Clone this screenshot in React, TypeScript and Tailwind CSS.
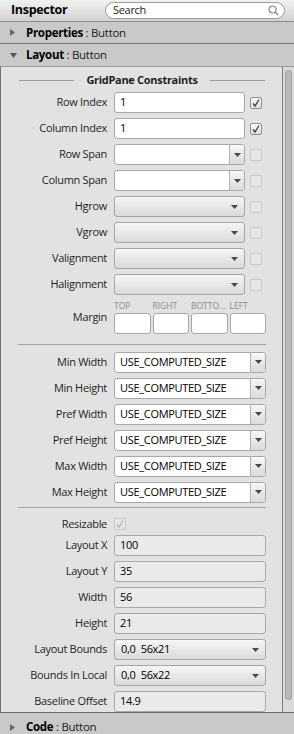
import React from 'react';

const Arrow: React.FC = () => (
  <svg width="7" height="4" viewBox="0 0 7 4">
    <path d="M0 0h7L3.5 4z" fill="#4a4a4a" />
  </svg>
);

const Check: React.FC<{ checked?: boolean; disabled?: boolean }> = ({ checked, disabled }) => (
  <div
    className={
      disabled
        ? 'w-[12px] h-[12px] rounded-[2px] border border-[#c9c9c9] bg-[#e6e6e6] flex items-center justify-center'
        : 'w-[12px] h-[12px] rounded-[2px] border border-[#8e8e8e] bg-linear-to-b from-[#fafafa] to-[#dedede] flex items-center justify-center'
    }
  >
    {checked && (
      <svg width="10" height="10" viewBox="0 0 10 10">
        <path d="M2 5.5 L4 8 L8 1.5" fill="none" stroke={disabled ? '#b4b4b4' : '#3d3d3d'} strokeWidth="1.3" />
      </svg>
    )}
  </div>
);

const TextField: React.FC<{ value?: string; w: string; readOnly?: boolean }> = ({ value, w, readOnly }) => (
  <div
    className={`${w} h-[21px] rounded-[3px] border border-[#a8a8a8] pl-[5px] flex items-center text-black ${
      readOnly ? 'bg-[#eaeaea]' : 'bg-white'
    }`}
  >
    {value}
  </div>
);

const Combo: React.FC<{ value?: string; w: string }> = ({ value, w }) => (
  <div
    className={`${w} h-[21px] rounded-[3px] border border-[#a6a6a6] bg-linear-to-b from-[#f6f6f6] to-[#dadada] pl-[6px] pr-[6px] flex items-center justify-between text-black whitespace-pre`}
  >
    <span>{value}</span>
    <Arrow />
  </div>
);

const EditCombo: React.FC<{ value?: string; w: string }> = ({ value, w }) => (
  <div className={`${w} h-[21px] rounded-[3px] border border-[#a8a8a8] bg-white flex overflow-hidden text-black`}>
    <div className="flex-1 pl-[5px] flex items-center">{value}</div>
    <div className="w-[15px] border-l border-[#b3b3b3] bg-linear-to-b from-[#f7f7f7] to-[#dadada] flex items-center justify-center">
      <Arrow />
    </div>
  </div>
);

const Row: React.FC<{ label: string; children: React.ReactNode; className?: string }> = ({ label, children, className }) => (
  <div className={`flex items-center h-[21px] ${className ?? ''}`}>
    <div className="w-[106px] text-right text-[#1f1f1f]">{label}</div>
    <div className="ml-[7px] flex items-center">{children}</div>
  </div>
);

const Section: React.FC<{ title: string; open?: boolean; className?: string }> = ({ title, open, className }) => (
  <div className={`flex items-center bg-[#c9c9c9] pl-[10px] text-[11.5px] ${className ?? ''}`}>
    <span className="w-[16px] flex items-center">
      {open ? (
        <svg width="7" height="5" viewBox="0 0 7 5">
          <path d="M0 0h7L3.5 5z" fill="#555" />
        </svg>
      ) : (
        <svg width="5" height="7" viewBox="0 0 5 7">
          <path d="M0 0v7L5 3.5z" fill="#666" />
        </svg>
      )}
    </span>
    <span className="font-bold text-black">{title}</span>
    <span className="text-[#222]">&nbsp;: Button</span>
  </div>
);

const constraintFields = [
  { label: 'Row Index', kind: 'text', value: '1', checked: true },
  { label: 'Column Index', kind: 'text', value: '1', checked: true },
  { label: 'Row Span', kind: 'edit' },
  { label: 'Column Span', kind: 'edit' },
  { label: 'Hgrow', kind: 'combo' },
  { label: 'Vgrow', kind: 'combo' },
  { label: 'Valignment', kind: 'combo' },
  { label: 'Halignment', kind: 'combo' },
];

const sizeFields = ['Min Width', 'Min Height', 'Pref Width', 'Pref Height', 'Max Width', 'Max Height'];

export default function App() {
  return (
    <div className="w-[294px] h-[734px] overflow-hidden flex flex-col bg-[#e2e2e2] font-['Open_Sans',sans-serif] text-[11px] tracking-[-0.3px]">
      <div className="h-[22px] shrink-0 flex items-center pl-[11px] pr-[9px] bg-linear-to-b from-[#f1f1f1] to-[#d2d2d2] border-b border-[#8d8d8d]">
        <span className="font-bold text-[12.5px] text-black">Inspector</span>
        <div className="ml-auto w-[180px] h-[17px] rounded-full border border-[#9c9c9c] bg-white flex items-center pl-[7px] pr-[5px] text-[#222]">
          <span>Search</span>
          <svg className="ml-auto" width="11" height="11" viewBox="0 0 11 11">
            <circle cx="4.5" cy="4.5" r="3.5" fill="none" stroke="#8a8a8a" strokeWidth="1.2" />
            <path d="M7 7 L10 10" stroke="#8a8a8a" strokeWidth="1.6" />
          </svg>
        </div>
      </div>

      <Section title="Properties" className="h-[22px] shrink-0 border-b border-[#727272]" />
      <Section title="Layout" open className="h-[23px] shrink-0 border-b border-[#9a9a9a]" />

      <div className="h-[645px] shrink-0 flex border-l border-[#707070] overflow-hidden">
        <div className="flex-1 flex flex-col pt-[5px]">
          <div className="h-[16px] flex items-center ml-[18px] w-[246px]">
            <div className="flex-1 h-px bg-[#9c9c9c]" />
            <span className="mx-[12px] font-bold text-[#1e1e1e]">GridPane Constraints</span>
            <div className="flex-1 h-px bg-[#9c9c9c]" />
          </div>

          <div className="mt-[4px] flex flex-col gap-[5px]">
            {constraintFields.map((f) => (
              <Row key={f.label} label={f.label}>
                {f.kind === 'text' && <TextField value={f.value} w="w-[131px]" />}
                {f.kind === 'edit' && <EditCombo w="w-[131px]" />}
                {f.kind === 'combo' && <Combo w="w-[131px]" />}
                <div className="ml-[5px]">
                  <Check checked={f.checked} disabled={!f.checked} />
                </div>
              </Row>
            ))}
          </div>

          <div className="mt-[5px] flex items-center">
            <div className="w-[106px] text-right text-[#1f1f1f]">Margin</div>
            <div className="ml-[7px] w-[152px]">
              <div className="grid grid-cols-4 gap-[2px] h-[12px] text-[8.5px] tracking-normal text-[#8c8c8c] leading-[12px]">
                <span>TOP</span>
                <span>RIGHT</span>
                <span>BOTTO...</span>
                <span>LEFT</span>
              </div>
              <div className="mt-[1px] grid grid-cols-4 gap-[2px]">
                <div className="h-[21px] rounded-[3px] border border-[#a8a8a8] bg-white" />
                <div className="h-[21px] rounded-[3px] border border-[#a8a8a8] bg-white" />
                <div className="h-[21px] rounded-[3px] border border-[#a8a8a8] bg-white" />
                <div className="h-[21px] rounded-[3px] border border-[#a8a8a8] bg-white" />
              </div>
            </div>
          </div>

          <div className="mt-[10px] ml-[17px] w-[248px] h-px bg-[#a4a4a4]" />

          <div className="mt-[7px] flex flex-col gap-[5px]">
            {sizeFields.map((l) => (
              <Row key={l} label={l}>
                <EditCombo value="USE_COMPUTED_SIZE" w="w-[152px]" />
              </Row>
            ))}
          </div>

          <div className="mt-[4px] ml-[17px] w-[248px] h-px bg-[#a4a4a4]" />

          <Row label="Resizable" className="mt-[8px]">
            <Check checked disabled />
          </Row>

          <div className="mt-[3px] flex flex-col gap-[5px]">
            <Row label="Layout X">
              <TextField value="100" w="w-[152px]" readOnly />
            </Row>
            <Row label="Layout Y">
              <TextField value="35" w="w-[152px]" readOnly />
            </Row>
            <Row label="Width">
              <TextField value="56" w="w-[152px]" readOnly />
            </Row>
            <Row label="Height">
              <TextField value="21" w="w-[152px]" readOnly />
            </Row>
            <Row label="Layout Bounds">
              <Combo value="0,0  56x21" w="w-[152px]" />
            </Row>
            <Row label="Bounds In Local">
              <Combo value="0,0  56x22" w="w-[152px]" />
            </Row>
            <Row label="Baseline Offset">
              <TextField value="14.9" w="w-[152px]" readOnly />
            </Row>
          </div>
        </div>

        <div className="w-[12px] shrink-0 border-l border-[#7c7c7c] bg-[#dadada] pt-[3px] px-[2px]">
          <div className="h-[630px] rounded-[3px] border border-[#a3a3a3] bg-[#b9b9b9]" />
        </div>
      </div>

      <Section title="Code" className="h-[29px] shrink-0 border-t border-[#6c6c6c]" />
    </div>
  );
}
